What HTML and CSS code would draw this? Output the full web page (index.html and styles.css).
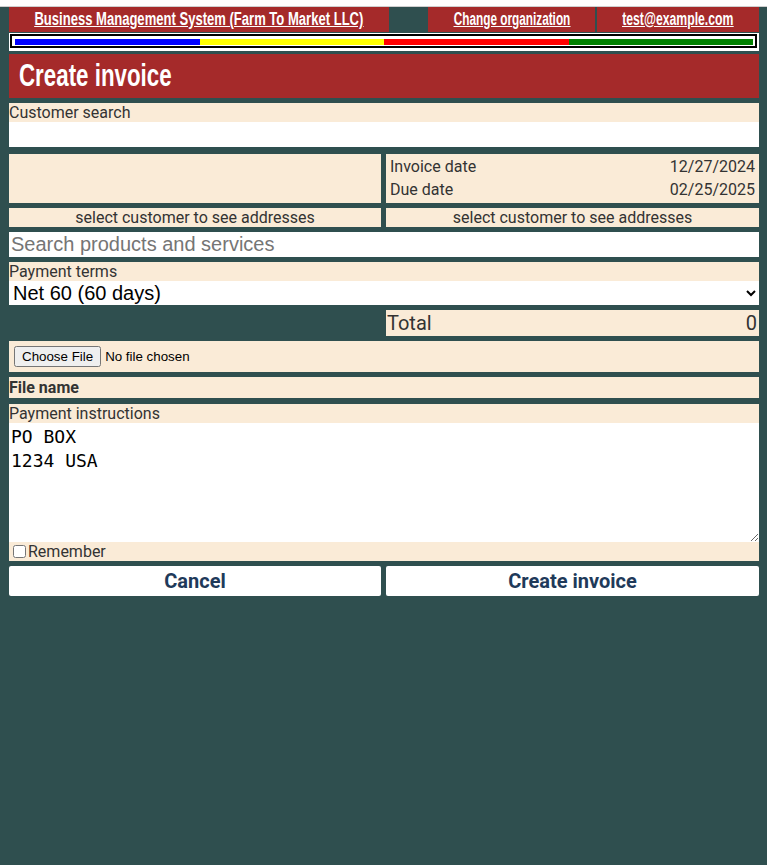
FILE: index.html
```html
<!DOCTYPE html>
<html>
<head>
<meta charset="utf-8">
<title>Create invoice</title>
<link rel="stylesheet" href="styles.css">
</head>
<body>
<div class="topstrip"></div>
<div class="page">
  <nav class="nav">
    <a class="nav-box nav-main" href="#"><span class="cond">Business Management System (Farm To Market LLC)</span></a>
    <div class="nav-spacer"></div>
    <a class="nav-box nav-org" href="#"><span class="cond">Change organization</span></a>
    <a class="nav-box nav-user" href="#"><span class="cond">test@example.com</span></a>
  </nav>
  <div class="rainbow">
    <div class="rainbow-inner">
      <div class="seg blue"></div><div class="seg yellow"></div><div class="seg red"></div><div class="seg green"></div>
    </div>
  </div>
  <h1 class="title"><span class="cond title-text">Create invoice</span></h1>

  <div class="field customer">
    <label class="label">Customer search</label>
    <input class="input" type="text">
  </div>

  <div class="two-col addr">
    <div class="panel"></div>
    <div class="panel dates">
      <div class="date-row"><span>Invoice date</span><span>12/27/2024</span></div>
      <div class="date-row"><span>Due date</span><span>02/25/2025</span></div>
    </div>
  </div>

  <div class="two-col">
    <div class="panel hint">select customer to see addresses</div>
    <div class="panel hint">select customer to see addresses</div>
  </div>

  <input class="input search" type="text" placeholder="Search products and services">

  <div class="field">
    <label class="label">Payment terms</label>
    <select class="select">
      <option>Net 60 (60 days)</option>
    </select>
  </div>

  <div class="two-col">
    <div></div>
    <div class="panel total"><span>Total</span><span>0</span></div>
  </div>

  <div class="panel file"><input type="file" class="file-input"></div>

  <div class="panel filename">File name</div>

  <div class="field instructions">
    <label class="label">Payment instructions</label>
    <textarea class="textarea">PO BOX
1234 USA</textarea>
    <label class="remember"><input type="checkbox" class="check">Remember</label>
  </div>

  <div class="two-col">
    <button class="btn">Cancel</button>
    <button class="btn">Create invoice</button>
  </div>
</div>
</body>
</html>
```

FILE: styles.css
```css
html, body {
  margin: 0;
  padding: 0;
}
body {
  background: #2f4f4f;
  font-family: Roboto, "Liberation Sans", sans-serif;
  font-size: 16px;
  color: #333;
  min-height: 865px;
}
.topstrip {
  height: 6px;
  background: #fff;
  border-bottom: 1px solid #cfcfcf;
}
.page {
  padding: 0 8px 0 9px;
  display: flex;
  flex-direction: column;
}
.cond {
  display: inline-block;
  font-family: "Liberation Sans", Arial, sans-serif;
  font-weight: bold;
  transform: scaleX(0.7);
  white-space: nowrap;
}
.nav {
  display: flex;
  height: 25px;
}
.nav-box {
  background: #a52a2a;
  color: #fff;
  display: flex;
  justify-content: center;
  align-items: center;
  font-size: 18px;
  text-decoration: underline;
}
.nav-box .cond { text-decoration: underline; }
.nav-main { width: 380px; }
.nav-main .cond { transform: scaleX(0.725); }
.nav-spacer { flex: 1; }
.nav-org { width: 167px; margin-right: 2px; }
.nav-org .cond { transform: scaleX(0.655); }
.nav-user { width: 162px; }
.nav-user .cond { transform: scaleX(0.68); }

.rainbow {
  margin-top: 1px;
  background: #fff;
  padding: 1px 2px 3px 1px;
}
.rainbow-inner {
  border: 2px solid #000;
  padding: 3px 2px 1px 3px;
  display: flex;
}
.seg { flex: 1; height: 6px; }
.blue { background: #0000ff; }
.yellow { background: #ffff00; }
.red { background: #ff0000; }
.green { background: #008000; }

.title {
  margin: 3px 0 0;
  background: #a52a2a;
  color: #fff;
  height: 44px;
  display: flex;
  align-items: center;
  padding-left: 10px;
  font-weight: normal;
}
.title-text {
  font-size: 31px;
  transform: scaleX(0.72);
  transform-origin: left center;
}

.field {
  display: flex;
  flex-direction: column;
  background: #faebd7;
  margin-top: 5px;
}
.label {
  line-height: 19px;
  height: 19px;
}
.input {
  border: none;
  outline: none;
  height: 25px;
  box-sizing: border-box;
  padding: 0 2px;
  font-family: "Liberation Sans", Arial, sans-serif;
  font-size: 20px;
  background: #fff;
  width: 100%;
}
.search {
  margin-top: 5px;
}
.search::placeholder { color: #757575; }

.two-col {
  display: grid;
  grid-template-columns: 372px 373px;
  column-gap: 5px;
  margin-top: 5px;
}
.addr { margin-top: 7px; }
.panel {
  background: #faebd7;
}
.dates {
  padding: 1px 4px 2px 4px;
}
.date-row {
  display: flex;
  justify-content: space-between;
  line-height: 23px;
}
.hint {
  text-align: center;
  line-height: 19px;
}
.select {
  border: none;
  outline: none;
  height: 24px;
  font-family: "Liberation Sans", Arial, sans-serif;
  font-size: 20px;
  color: #000;
  background: #fff;
  padding: 0;
  width: 100%;
}
.total {
  display: flex;
  justify-content: space-between;
  align-items: center;
  height: 26px;
  font-size: 20px;
  padding: 0 2px 0 1px;
}
.file {
  margin-top: 5px;
  padding: 5px;
  height: 31px;
  box-sizing: border-box;
  display: flex;
  align-items: center;
}
.file-input {
  font-family: "Liberation Sans", Arial, sans-serif;
  font-size: 13.33px;
  color: #000;
}
.filename {
  margin-top: 5px;
  font-weight: bold;
  line-height: 21px;
}
.instructions { margin-top: 6px; }
.textarea {
  display: block;
  border: none;
  outline: none;
  height: 119px;
  box-sizing: border-box;
  padding: 2px 2px 0;
  font-family: "DejaVu Sans Mono", "Liberation Mono", monospace;
  font-size: 18px;
  line-height: 24px;
  color: #000;
  background: #fff;
  width: 100%;
  resize: vertical;
  margin: 0;
}
.remember {
  display: flex;
  align-items: center;
  height: 19px;
  line-height: 19px;
}
.check {
  margin: 0 2px 0 4px;
  width: 13px;
  height: 13px;
}
.btn {
  height: 30px;
  border: none;
  border-radius: 2px;
  background: #fff;
  font-family: Roboto, "Liberation Sans", sans-serif;
  font-weight: bold;
  font-size: 20px;
  color: #1f3a5a;
  cursor: pointer;
  padding: 0;
}
```
